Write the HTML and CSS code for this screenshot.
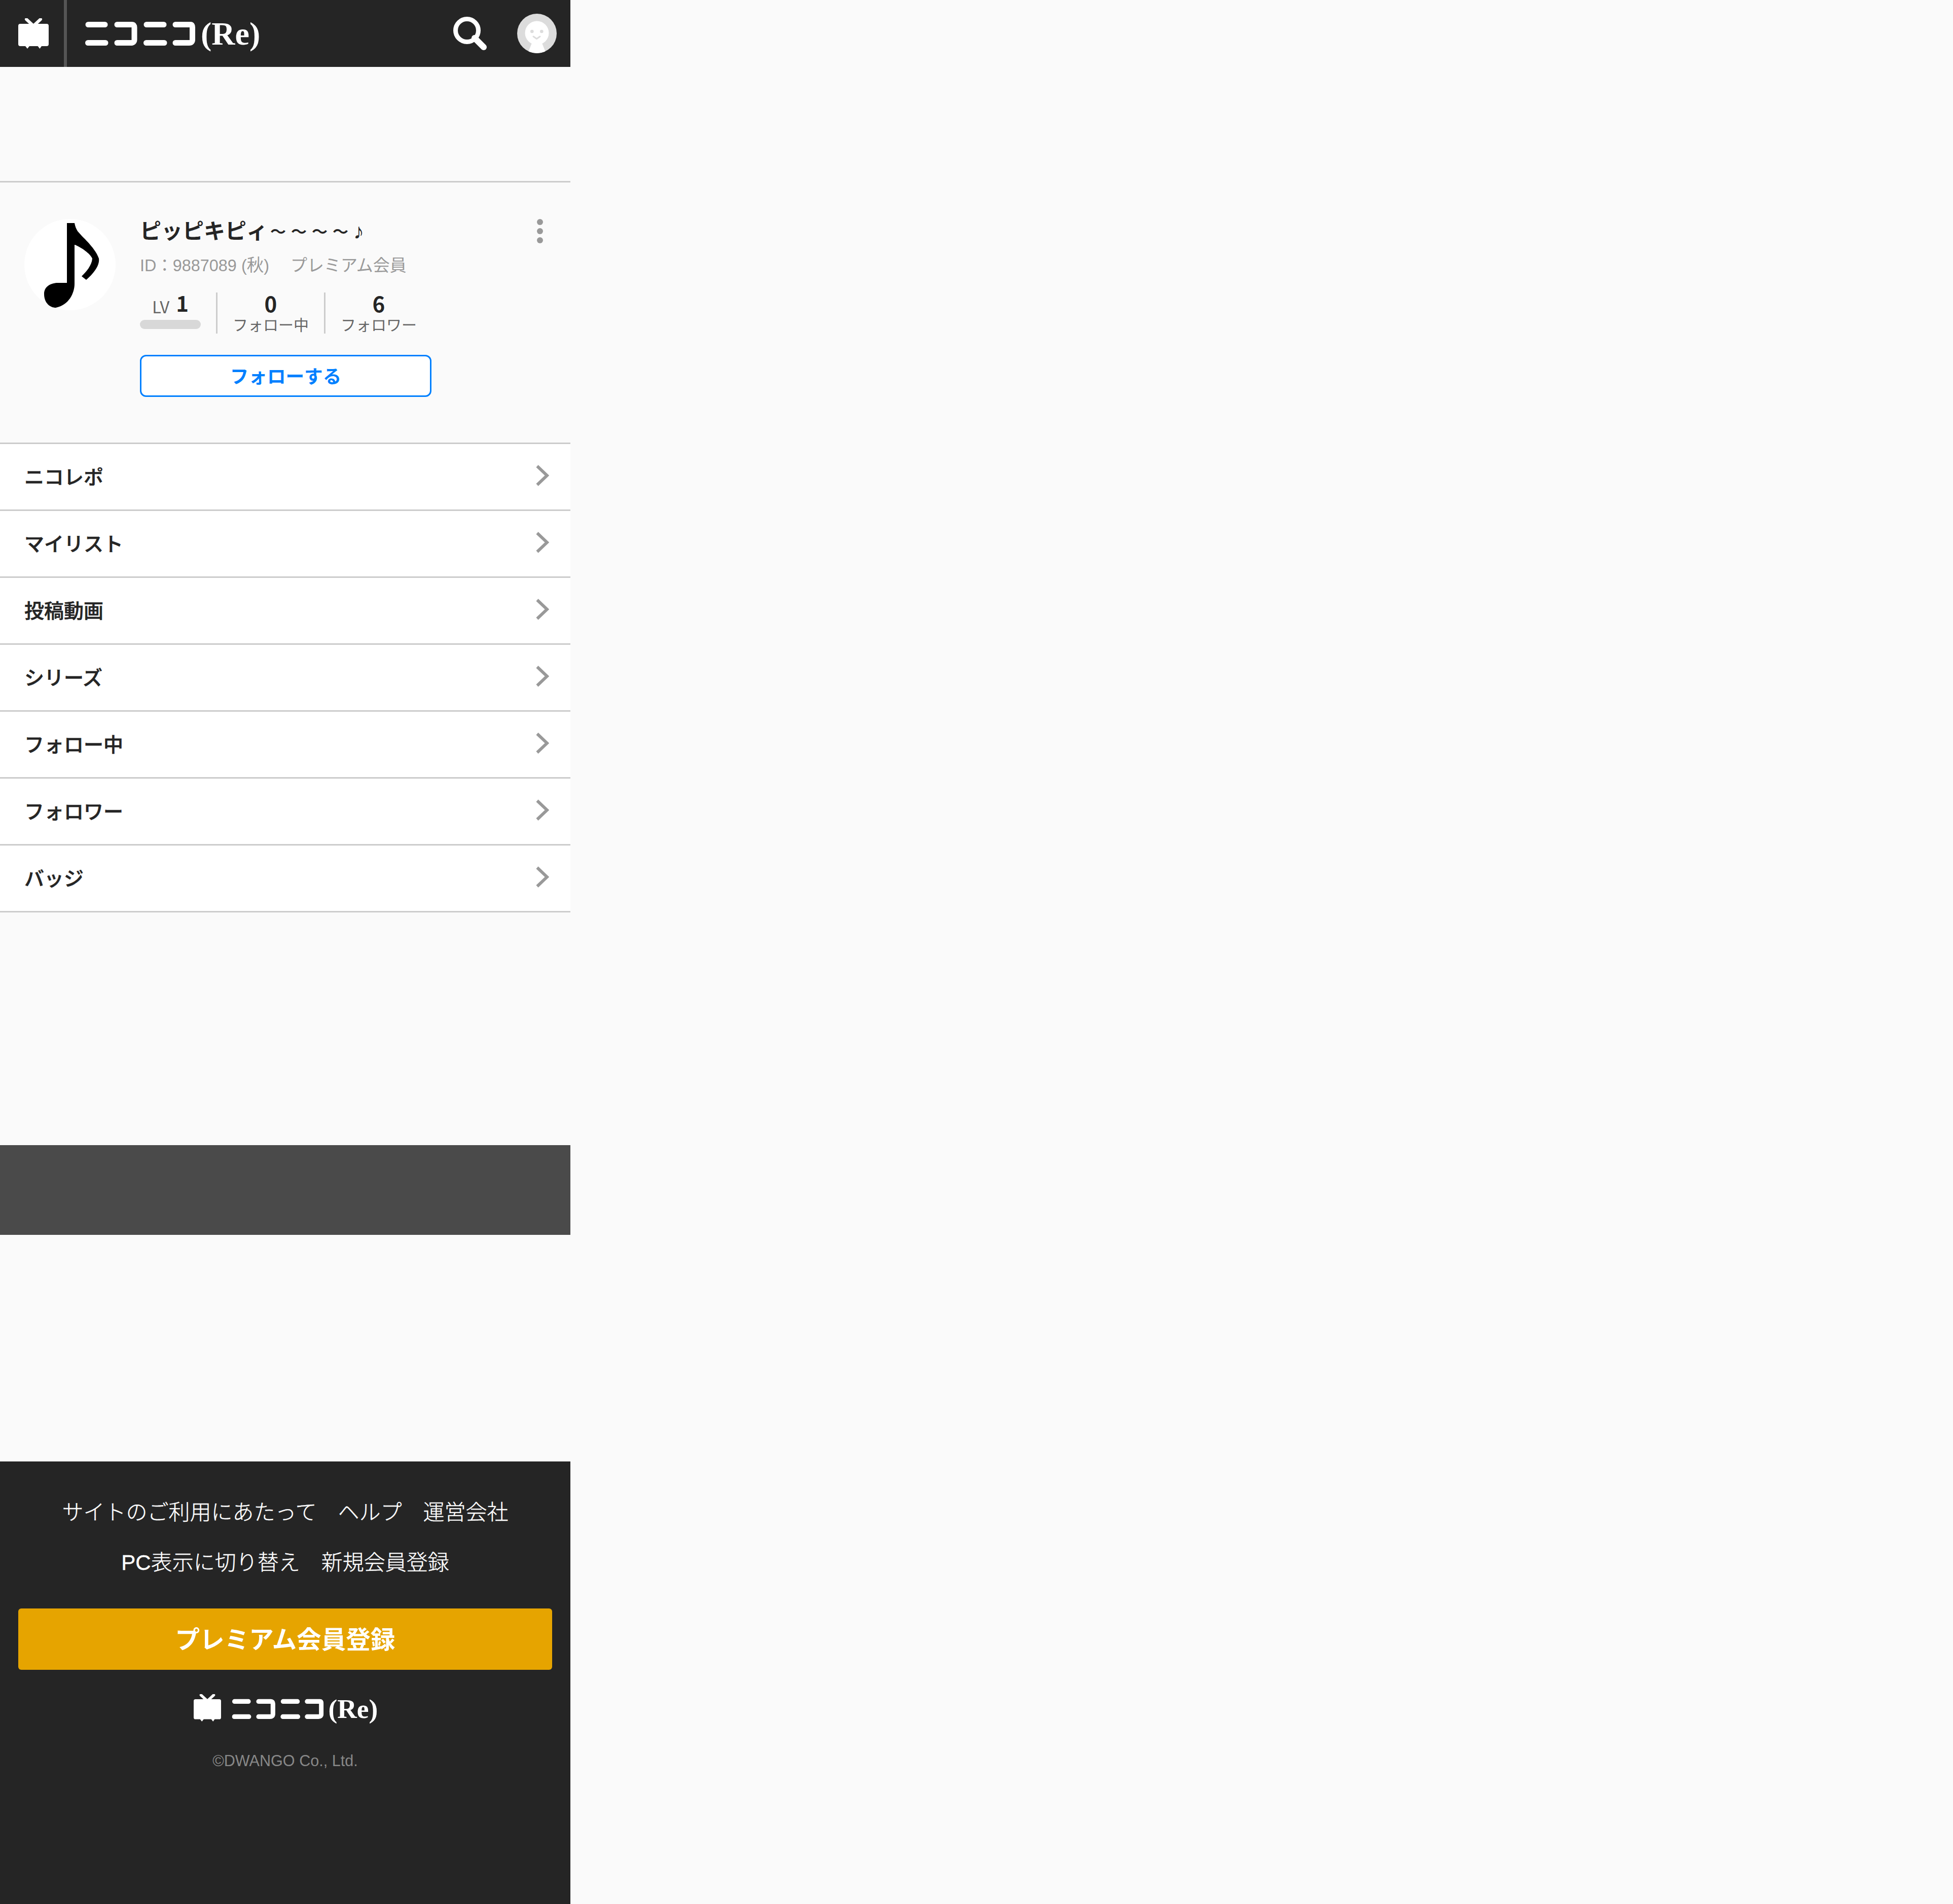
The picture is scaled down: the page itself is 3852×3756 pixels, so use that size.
FILE: index.html
```html
<!DOCTYPE html>
<html lang="ja">
<head>
<meta charset="utf-8">
<title>ピッピキピィ～～～～♪ - ニコニコ(Re)</title>
<link rel="stylesheet" href="styles.css">
</head>
<body>
<svg class="defs" width="0" height="0" aria-hidden="true">
  <symbol id="tv" viewBox="0 0 60 60">
    <path d="M16 2 30 15 44 2" fill="none" stroke="#fff" stroke-width="6" stroke-linecap="round" stroke-linejoin="round"/>
    <path d="M4 11H56a4 4 0 0 1 4 4V51a4 4 0 0 1-4 4H46L42.500 60 38.500 55H22L18 60 14 55H4a4 4 0 0 1-4-4V15a4 4 0 0 1 4-4Z" fill="#fff"/>
  </symbol>
  <symbol id="niconico" viewBox="0 0 217 48">
    <g fill="none" stroke="#fff" stroke-width="11" stroke-linecap="round">
      <path d="M6 6.500H39M5.500 42.500H40"/>
      <path d="M63 6.500H92Q97 6.500 97 12V36Q97 42.500 90 42.500H63"/>
      <path d="M121 6.500H155M120.500 42.500H156"/>
      <path d="M178 6.500H208Q211.500 6.500 211.500 12V36Q211.500 42.500 205 42.500H178"/>
    </g>
  </symbol>
</svg>

<header class="topbar">
  <a class="topbar-home"><svg class="tv-icon"><use href="#tv"/></svg></a>
  <div class="topbar-logo">
    <svg class="wordmark" viewBox="0 0 342 48"><use href="#niconico" width="217" height="48"/><text class="wordmark-re" x="228" y="46">(Re)</text></svg>
  </div>
  <svg class="search-icon" viewBox="0 0 66 66"><circle cx="27" cy="27" r="22.500" fill="none" stroke="#fff" stroke-width="9"/><path d="M42 42 60 60" stroke="#fff" stroke-width="12" stroke-linecap="round"/></svg>
  <svg class="user-icon" viewBox="0 0 78 78">
    <defs><clipPath id="user-clip"><circle cx="39" cy="39" r="39"/></clipPath></defs>
    <circle cx="39" cy="39" r="39" fill="#dcdcdc"/>
    <g clip-path="url(#user-clip)">
      <path d="M29 58H49L57 78H21Z" fill="#fff"/>
      <circle cx="39" cy="38" r="23.500" fill="#fff"/>
    </g>
    <circle cx="29.300" cy="35" r="3.300" fill="#dcdcdc"/>
    <circle cx="48.300" cy="35" r="3.300" fill="#dcdcdc"/>
    <path d="M32 45 38.500 49.500 45 45" fill="none" stroke="#dcdcdc" stroke-width="3" stroke-linecap="round" stroke-linejoin="round"/>
  </svg>
</header>

<main class="page">
  <div class="ad-slot"></div>

  <section class="profile">
    <svg class="avatar" viewBox="0 0 180 180">
      <circle cx="90" cy="90" r="90" fill="#fff"/>
      <path d="M84 8H99C100 14 102 19 105 24L113 33C124 44 142 62 147 78 149 92 136 108 122 120L113 113C122 104 133 92 134 78 130 68 112 56 100 51H99V128C99 146 88 170 62 175 52 175 39 167 39 148 39 132 54 126 66 126H84Z" fill="#000"/>
    </svg>
    <div class="profile-body">
      <h1 class="profile-name">ピッピキピィ<span class="wave">～～～～</span>♪</h1>
      <p class="profile-id">ID：9887089 (<span class="id-cjk">秋</span>)<span class="profile-tier">プレミアム会員</span></p>
      <div class="stats">
        <div class="stat-level">
          <div class="stat-level-row"><span class="stat-level-label">LV</span><span class="stat-num">1</span></div>
          <div class="level-bar"></div>
        </div>
        <div class="stat">
          <span class="stat-num">0</span>
          <span class="stat-label">フォロー中</span>
        </div>
        <div class="stat">
          <span class="stat-num">6</span>
          <span class="stat-label">フォロワー</span>
        </div>
      </div>
      <a class="follow-btn">フォローする</a>
    </div>
    <div class="more-btn"><i></i><i></i><i></i></div>
  </section>

  <nav class="menu">
    <a class="menu-row">ニコレポ<svg class="chevron" viewBox="0 0 26 42"><path d="M2.500 2.500 22 21 2.500 39.500"/></svg></a>
    <a class="menu-row">マイリスト<svg class="chevron" viewBox="0 0 26 42"><path d="M2.500 2.500 22 21 2.500 39.500"/></svg></a>
    <a class="menu-row">投稿動画<svg class="chevron" viewBox="0 0 26 42"><path d="M2.500 2.500 22 21 2.500 39.500"/></svg></a>
    <a class="menu-row">シリーズ<svg class="chevron" viewBox="0 0 26 42"><path d="M2.500 2.500 22 21 2.500 39.500"/></svg></a>
    <a class="menu-row">フォロー中<svg class="chevron" viewBox="0 0 26 42"><path d="M2.500 2.500 22 21 2.500 39.500"/></svg></a>
    <a class="menu-row">フォロワー<svg class="chevron" viewBox="0 0 26 42"><path d="M2.500 2.500 22 21 2.500 39.500"/></svg></a>
    <a class="menu-row">バッジ<svg class="chevron" viewBox="0 0 26 42"><path d="M2.500 2.500 22 21 2.500 39.500"/></svg></a>
  </nav>

  <div class="banner"></div>
</main>

<footer class="footer">
  <div class="footer-links">
    <div class="footer-line"><a>サイトのご利用にあたって</a><a>ヘルプ</a><a>運営会社</a></div>
    <div class="footer-line"><a>PC表示に切り替え</a><a>新規会員登録</a></div>
  </div>
  <a class="premium-btn">プレミアム会員登録</a>
  <div class="footer-logo">
    <svg class="footer-tv"><use href="#tv"/></svg>
    <svg class="footer-wordmark" viewBox="0 0 342 48"><use href="#niconico" width="217" height="48"/><text class="wordmark-re" x="228" y="46">(Re)</text></svg>
  </div>
  <p class="copyright">©DWANGO Co., Ltd.</p>
</footer>
</body>
</html>
```

FILE: styles.css
```css
* { box-sizing: border-box; }
html, body { margin: 0; padding: 0; }
body {
  background: #fafafa;
  color: #252525;
  font-family: "Liberation Sans", "Noto Sans CJK JP", sans-serif;
  min-height: 3756px;
}
.defs { position: absolute; }
.topbar, .page, .footer { width: 1125px; }

.topbar {
  height: 132px;
  background: #252525;
  display: flex;
  align-items: center;
}
.topbar-home {
  width: 132px;
  height: 132px;
  border-right: 6px solid #555;
  padding: 36px 0 0 36px;
  flex: none;
}
.tv-icon { width: 60px; height: 60px; display: block; }
.topbar-logo { margin-left: 36px; flex: 1; display: flex; }
.wordmark { width: 342px; height: 48px; display: block; overflow: visible; }
.wordmark-re {
  font-family: "Liberation Serif", serif;
  font-weight: 700;
  font-size: 64px;
  fill: #fff;
}
.search-icon { width: 66px; height: 66px; flex: none; }
.user-icon { width: 78px; height: 78px; flex: none; margin: 0 27px 0 60px; }

.ad-slot { height: 225px; }

.profile {
  position: relative;
  display: flex;
  gap: 48px;
  padding: 72px 48px 90px;
  border-top: 3px solid #ccc;
  border-bottom: 3px solid #ccc;
}
.avatar { width: 180px; height: 180px; flex: none; display: block; }
.profile-body { display: flex; flex-direction: column; align-items: flex-start; margin-top: 1px; }
.profile-name {
  margin: 0;
  font-size: 42px;
  line-height: 48px;
  font-weight: 700;
  color: #252525;
  white-space: nowrap;
}
.wave {
  font-size: 31px;
  letter-spacing: 10px;
  margin-left: 5px;
  vertical-align: 3px;
}
.profile-id {
  margin: 18px 0 0;
  font-size: 32.4px;
  line-height: 48px;
  color: #999;
  white-space: nowrap;
}
.id-cjk { font-size: 33.6px; }
.profile-tier { margin-left: 42px; font-size: 33px; }

.stats { display: flex; margin-top: 29px; height: 81px; font-family: "Noto Sans CJK JP", sans-serif; }
.stat-level { width: 150px; padding-right: 30px; }
.stat-level-row { height: 48px; margin-top: -1px; text-align: center; line-height: 48px; white-space: nowrap; }
.stat-level-label { font-size: 33px; color: #666; margin-right: 13px; vertical-align: -3px; }
.level-bar { height: 18px; margin-top: 7px; background: #d8d8d8; border-radius: 9px; }
.stat {
  border-left: 3px solid #ccc;
  padding: 0 30px;
  width: 213px;
  display: flex;
  flex-direction: column;
  align-items: center;
}
.stat-num { font-size: 42px; line-height: 42px; height: 46px; font-weight: 700; color: #252525; }
.stat-label { font-size: 30px; line-height: 33px; color: #666; white-space: nowrap; }

.follow-btn {
  margin-top: 42px;
  width: 575px;
  height: 83px;
  border: 3px solid #0080ff;
  border-radius: 12px;
  padding-bottom: 3px;
  background: #fff;
  color: #0080ff;
  font-family: "Noto Sans CJK JP", sans-serif;
  font-size: 36.6px;
  font-weight: 700;
  display: flex;
  align-items: center;
  justify-content: center;
}

.more-btn {
  position: absolute;
  top: 72px;
  right: 54px;
  display: flex;
  flex-direction: column;
  gap: 6px;
}
.more-btn i { width: 12px; height: 12px; border-radius: 50%; background: #999; display: block; }

.menu-row {
  height: 132px;
  background: #fff;
  border-bottom: 3px solid #ccc;
  padding: 0 42px 5px 48px;
  display: flex;
  align-items: center;
  justify-content: space-between;
  font-size: 39px;
  font-weight: 500;
  -webkit-text-stroke: 0.6px #252525;
  color: #252525;
}
.chevron { width: 26px; height: 42px; flex: none; }
.chevron path { fill: none; stroke: #999; stroke-width: 6; }

.banner { margin-top: 459px; height: 177px; background: #4a4a4a; }

.footer {
  margin-top: 447px;
  height: 873px;
  background: #252525;
  padding: 51px 36px 0;
  display: flex;
  flex-direction: column;
  color: #fff;
}
.footer-links { font-size: 42px; line-height: 99px; font-weight: 300; -webkit-text-stroke: 0.4px #fff; }
.footer-line { display: flex; justify-content: center; gap: 42px; white-space: nowrap; }
.premium-btn {
  margin-top: 41px;
  height: 121px;
  padding-bottom: 5px;
  background: #e6a400;
  border-radius: 6px;
  font-size: 48.6px;
  font-weight: 700;
  display: flex;
  align-items: center;
  justify-content: center;
}
.footer-logo {
  margin-top: 48px;
  display: flex;
  justify-content: center;
  align-items: flex-start;
  gap: 21px;
}
.footer-tv { width: 54px; height: 54px; display: block; }
.footer-wordmark { width: 286px; height: 40px; margin-top: 9px; display: block; overflow: visible; }
.copyright {
  margin: 59px 0 0;
  font-size: 30.6px;
  line-height: 36px;
  text-align: center;
  color: #888;
}
```
